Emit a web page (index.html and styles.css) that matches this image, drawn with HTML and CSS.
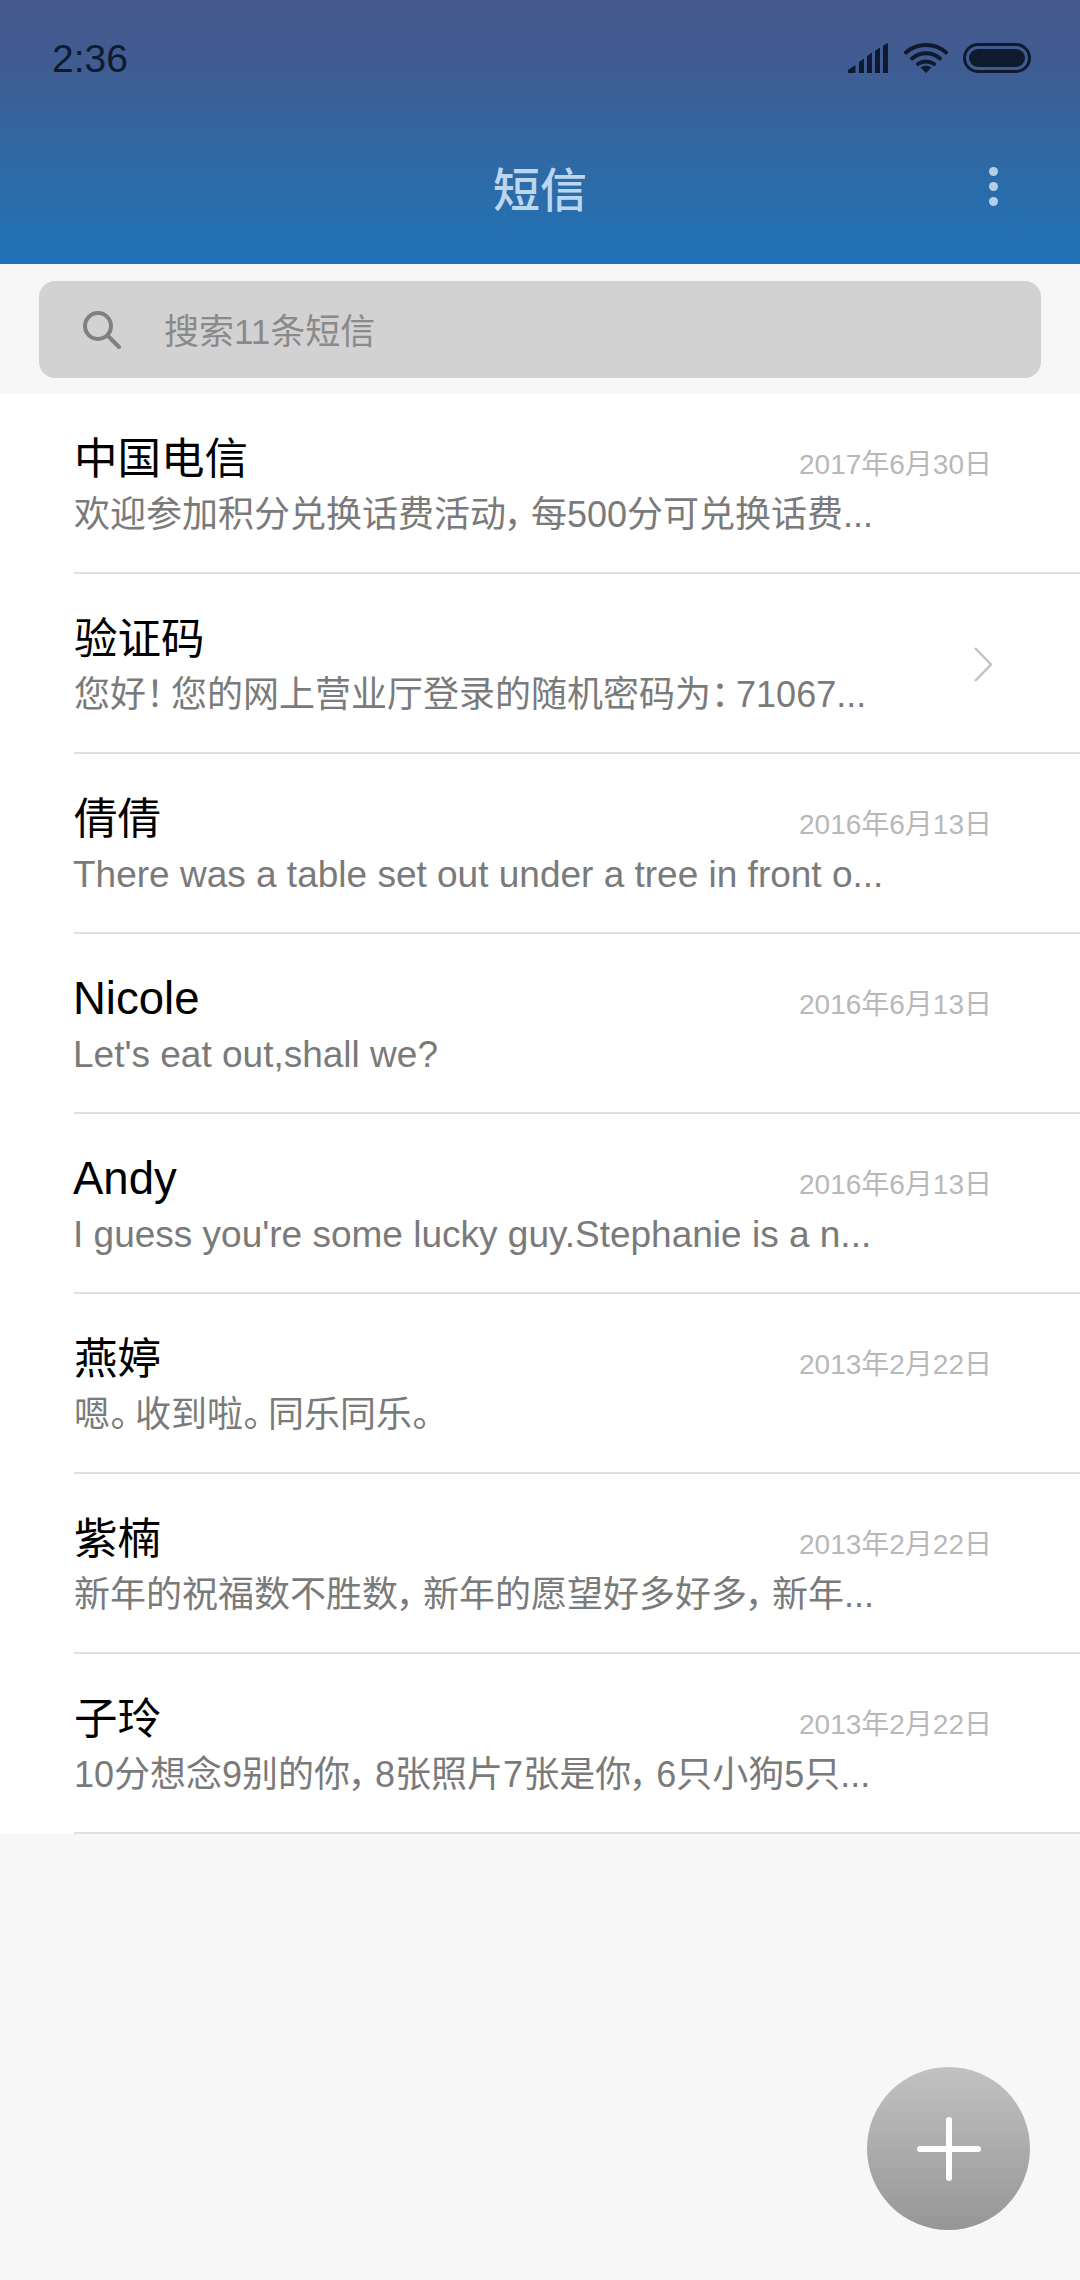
FILE: index.html
```html
<!DOCTYPE html>
<html lang="zh-CN">
<head>
  <meta charset="UTF-8">
  <meta name="viewport" content="width=device-width, initial-scale=1.0">
  <title>短信</title>
  <link rel="stylesheet" href="styles.css">
</head>
<body>
  <header class="header">
    <div class="status-bar">
      <span class="time">2:36</span>
      <div class="status-icons">
        <svg class="icon-signal" width="41" height="30" viewBox="0 0 41 30">
          <path d="M0 30v-3l7.500-5v8zM11 30V19l5-3.500V30zM19 30V13l5-3.500V30zM27 30V8l5-3.500V30zM35 30V2.500l5-2.500v30z" fill="#101a2e"/>
        </svg>
        <svg class="icon-wifi" width="44" height="30" viewBox="0 0 44 30">
          <g fill="none" stroke="#101a2e" stroke-width="4" stroke-linecap="round">
            <path d="M2 9.500C13 -0.500 31 -0.500 42 9.500"/>
            <path d="M8 15.500C16 8.500 28 8.500 36 15.500"/>
            <path d="M14 21C18.500 17.500 25.500 17.500 30 21"/>
          </g>
          <path d="M22 30l-5.500-5.500c3-2.500 8-2.500 11 0z" fill="#101a2e"/>
        </svg>
        <svg class="icon-battery" width="68" height="30" viewBox="0 0 68 30">
          <rect x="1.500" y="1.500" width="65" height="27" rx="13.500" fill="none" stroke="#101a2e" stroke-width="3"/>
          <rect x="6" y="6" width="56" height="18" rx="9" fill="#101a2e"/>
        </svg>
      </div>
    </div>
    <div class="title-bar">
      <h1 class="title">短信</h1>
      <div class="more"><i></i><i></i><i></i></div>
    </div>
  </header>

  <div class="search-wrap">
    <div class="search">
      <svg class="icon-search" width="38" height="38" viewBox="0 0 38 38">
        <circle cx="15" cy="15" r="13" fill="none" stroke="#808080" stroke-width="4"/>
        <path d="M25 25l11 11" fill="none" stroke="#808080" stroke-width="4" stroke-linecap="round"/>
      </svg>
      <span class="search-text">搜索11条短信</span>
    </div>
  </div>

  <main class="list">
    <div class="row">
      <div class="row-body">
        <div class="row-top"><span class="name">中国电信</span><span class="date">2017年6月30日</span></div>
        <div class="preview">欢迎参加积分兑换话费活动<span class="punct">，</span>每500分可兑换话费...</div>
      </div>
    </div>
    <div class="row">
      <div class="row-body">
        <div class="row-top"><span class="name">验证码</span></div>
        <div class="preview">您好<span class="punct">！</span>您的网上营业厅登录的随机密码为<span class="punct">：</span>71067...</div>
      </div>
      <svg class="chevron" width="18" height="35" viewBox="0 0 18 35">
        <path d="M1 1l16 16.500L1 34" fill="none" stroke="#c2c2c2" stroke-width="2.500"/>
      </svg>
    </div>
    <div class="row">
      <div class="row-body">
        <div class="row-top"><span class="name">倩倩</span><span class="date">2016年6月13日</span></div>
        <div class="preview latin">There was a table set out under a tree in front o...</div>
      </div>
    </div>
    <div class="row">
      <div class="row-body">
        <div class="row-top"><span class="name latin">Nicole</span><span class="date">2016年6月13日</span></div>
        <div class="preview latin">Let's eat out,shall we?</div>
      </div>
    </div>
    <div class="row">
      <div class="row-body">
        <div class="row-top"><span class="name latin">Andy</span><span class="date">2016年6月13日</span></div>
        <div class="preview latin">I guess you're some lucky guy.Stephanie is a n...</div>
      </div>
    </div>
    <div class="row">
      <div class="row-body">
        <div class="row-top"><span class="name">燕婷</span><span class="date">2013年2月22日</span></div>
        <div class="preview">嗯<span class="punct">。</span>收到啦<span class="punct">。</span>同乐同乐<span class="punct">。</span></div>
      </div>
    </div>
    <div class="row">
      <div class="row-body">
        <div class="row-top"><span class="name">紫楠</span><span class="date">2013年2月22日</span></div>
        <div class="preview">新年的祝福数不胜数<span class="punct">，</span>新年的愿望好多好多<span class="punct">，</span>新年...</div>
      </div>
    </div>
    <div class="row">
      <div class="row-body">
        <div class="row-top"><span class="name">子玲</span><span class="date">2013年2月22日</span></div>
        <div class="preview">10分想念9别的你<span class="punct">，</span>8张照片7张是你<span class="punct">，</span>6只小狗5只...</div>
      </div>
    </div>
  </main>

  <div class="fab">
    <svg width="64" height="64" viewBox="0 0 64 64">
      <path d="M32 3v58M3 32h58" fill="none" stroke="#fff" stroke-width="6" stroke-linecap="round"/>
    </svg>
  </div>
</body>
</html>
```

FILE: styles.css
```css
* {
  box-sizing: border-box;
}
html, body {
  height: 100%;
}
body {
  position: relative;
  margin: 0;
  background-color: #f7f7f7;
  font-family: "Liberation Sans", "Noto Sans CJK SC", sans-serif;
  overflow: hidden;
}
.header {
  height: 264px;
  background: linear-gradient(to bottom, #47598c 0%, #3f5c92 25%, #2f69a4 60%, #2073b7 100%);
}
.status-bar {
  display: flex;
  justify-content: space-between;
  align-items: center;
  height: 116px;
  padding: 0 49px 0 52px;
}
.time {
  margin-top: 2px;
  font-size: 39px;
  color: #101a2e;
}
.status-icons {
  display: flex;
  align-items: center;
  gap: 15px;
}
.title-bar {
  position: relative;
  display: flex;
  justify-content: center;
  align-items: center;
  height: 146px;
  padding-bottom: 6px;
}
.title {
  margin: 0;
  font-size: 47px;
  font-weight: 500;
  color: #bcd6ef;
}
.more {
  position: absolute;
  right: 82px;
  top: 51px;
  display: flex;
  flex-direction: column;
  gap: 6px;
}
.more i {
  display: block;
  width: 9px;
  height: 9px;
  border-radius: 50%;
  background: #b5cfe8;
}
.search-wrap {
  padding: 17px 39px 16px;
}
.search {
  display: flex;
  align-items: center;
  height: 97px;
  padding-left: 44px;
  background: #d2d2d2;
  border-radius: 16px;
}
.search-text {
  margin-left: 43px;
  margin-bottom: 2px;
  font-size: 35px;
  color: #8a8a8a;
}
.list {
  background: #fff;
}
.row {
  display: flex;
  align-items: center;
  height: 180px;
  margin-left: 74px;
  padding-right: 88px;
  border-bottom: 2px solid #e0e0e0;
}
.row-body {
  flex: 1;
  min-width: 0;
  padding-top: 7px;
}
.row-top {
  display: flex;
  justify-content: space-between;
  align-items: flex-end;
  height: 50px;
}
.name {
  font-size: 43.500px;
  line-height: 50px;
  color: #000;
}
.name.latin {
  margin-left: -1px;
  font-size: 45.500px;
}
.date {
  font-size: 28px;
  line-height: 38px;
  color: #b8b8b8;
}
.preview {
  margin-top: 7px;
  font-size: 36px;
  line-height: 48px;
  white-space: nowrap;
  color: #7a7a7a;
  font-feature-settings: "palt";
}
.preview.latin {
  margin-left: -1px;
  font-size: 37px;
}
.punct {
  margin-right: 7px;
}
.chevron {
  margin-top: 2px;
}
.fab {
  position: absolute;
  right: 50px;
  bottom: 50px;
  display: flex;
  justify-content: center;
  align-items: center;
  width: 163px;
  height: 163px;
  border-radius: 50%;
  background: linear-gradient(to bottom, #c2c2c2, #969696);
}
```
